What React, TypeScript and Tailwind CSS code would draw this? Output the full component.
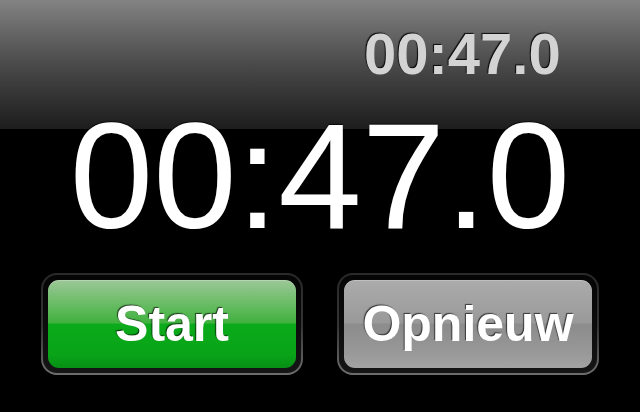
function FramedButton({ label, face }: { label: string; face: string }) {
  return (
    <div className="w-[262px] h-[102px] rounded-[16px] p-[2px] bg-gradient-to-b from-[#2a2a2a] via-[#333333] to-[#6e6e6e]">
      <div className="w-full h-full rounded-[14px] p-[5px] bg-gradient-to-b from-[#050505] to-[#151515]">
        <div
          className={`w-full h-full rounded-[11px] flex items-center justify-center shadow-[inset_0_1px_0_rgba(255,255,255,0.25)] ${face}`}
        >
          <span className="text-white font-bold text-[50px] leading-none [text-shadow:-1px_-1px_1px_rgba(0,0,0,0.65)]">
            {label}
          </span>
        </div>
      </div>
    </div>
  );
}

export default function App() {
  return (
    <div className="w-[640px] h-[412px] bg-black overflow-hidden font-['Liberation_Sans',Arial,sans-serif]">
      <div className="h-[129px] bg-gradient-to-b from-[#838383] via-[#4a4a4a] to-[#1d1d1d] pt-[25px] pl-[364px]">
        <div className="text-[58px] font-bold leading-none text-[#d3d3d3] [text-shadow:-1px_-1px_1px_rgba(0,0,0,0.9)]">
          00:47.0
        </div>
      </div>
      <div className="relative -mt-[28px] text-center text-white text-[150px] leading-none [text-shadow:0_-1px_1px_rgba(0,0,0,0.8)]">
        00:47.0
      </div>
      <div className="mt-[22px] pl-[41px] flex gap-[34px]">
        <FramedButton
          label="Start"
          face="bg-[linear-gradient(to_bottom,#9cc798_0%,#6dbd69_25%,#40b13e_49%,#0aab1a_50%,#09a318_85%,#078f15_100%)]"
        />
        <FramedButton
          label="Opnieuw"
          face="bg-[linear-gradient(to_bottom,#ababab_0%,#a2a2a2_25%,#999999_49%,#8c8c8c_50%,#979797_80%,#a3a3a3_100%)]"
        />
      </div>
    </div>
  );
}
